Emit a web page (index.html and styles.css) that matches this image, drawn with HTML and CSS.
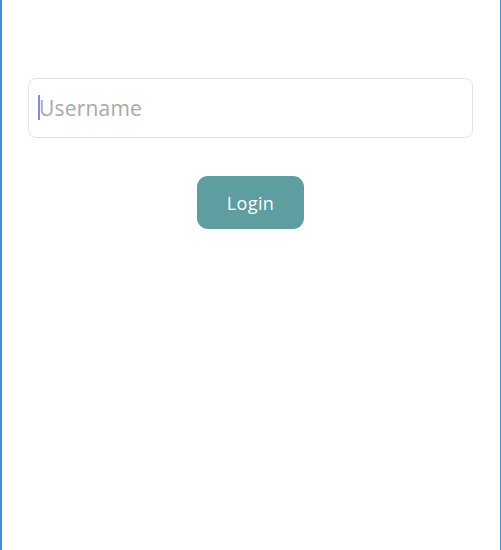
FILE: index.html
```
<!DOCTYPE html>
<html>
<head>
<meta charset="utf-8">
<link rel="stylesheet" href="styles.css">
</head>
<body>
<div class="frame">
  <form class="login">
    <div class="field">
      <span class="caret"></span>
      <input class="username" type="text" placeholder="Username">
    </div>
    <button class="btn" type="button">Login</button>
  </form>
</div>
</body>
</html>
```
FILE: styles.css
```
html, body {
  margin: 0;
  padding: 0;
  background: #ffffff;
}
.frame {
  box-sizing: border-box;
  width: 501px;
  height: 550px;
  border-left: 2px solid #3d8fd6;
  border-right: 1px solid #3d8fd6;
  padding: 78px 27px 0 26px;
  font-family: "Open Sans", "Liberation Sans", sans-serif;
}
.login {
  display: flex;
  flex-direction: column;
  align-items: center;
  gap: 38px;
  margin: 0;
}
.field {
  position: relative;
  width: 100%;
}
.username {
  box-sizing: border-box;
  width: 100%;
  height: 60px;
  border: 1px solid #e3e3e3;
  border-radius: 8px;
  padding: 0 0 0 10px;
  font-family: inherit;
  font-size: 21px;
  letter-spacing: 0.2px;
  color: #333;
  outline: none;
  background: #fff;
}
.username::placeholder {
  color: #a9a9a9;
}
.caret {
  position: absolute;
  left: 10px;
  top: 17px;
  width: 2px;
  height: 25px;
  background: #7b8ee6;
}
.btn {
  box-sizing: border-box;
  width: 107px;
  height: 53px;
  border: none;
  border-radius: 11px;
  background: #5f9ea0;
  color: #ffffff;
  font-family: inherit;
  font-size: 18px;
  letter-spacing: 0.4px;
  cursor: pointer;
  padding: 0;
}
```
